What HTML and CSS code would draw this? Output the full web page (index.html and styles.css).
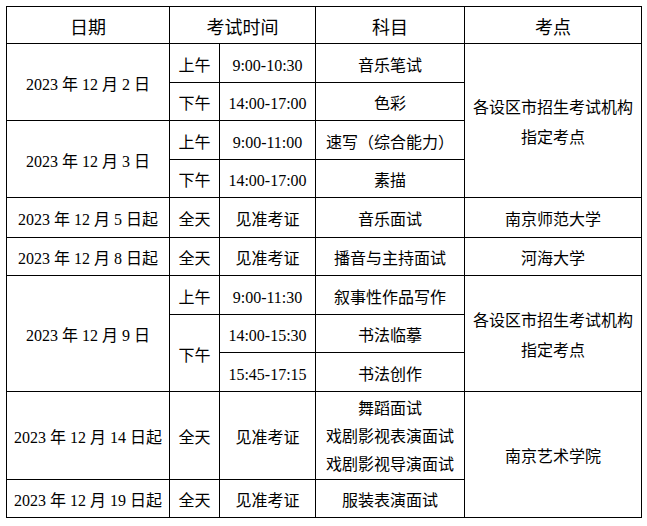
FILE: index.html
```html
<!DOCTYPE html>
<html lang="zh-CN">
<head>
<meta charset="utf-8">
<link rel="stylesheet" href="styles.css">
</head>
<body>
<table class="schedule">
  <colgroup>
    <col class="c-date">
    <col class="c-half">
    <col class="c-time">
    <col class="c-subj">
    <col class="c-place">
  </colgroup>
  <thead>
    <tr class="h37">
      <th>日期</th>
      <th colspan="2">考试时间</th>
      <th>科目</th>
      <th>考点</th>
    </tr>
  </thead>
  <tbody>
    <tr class="h39">
      <td rowspan="2">2023 年 12 月 2 日</td>
      <td>上午</td>
      <td>9:00-10:30</td>
      <td>音乐笔试</td>
      <td rowspan="4" class="multi">各设区市招生考试机构<br>指定考点</td>
    </tr>
    <tr class="h38">
      <td>下午</td>
      <td>14:00-17:00</td>
      <td>色彩</td>
    </tr>
    <tr class="h39">
      <td rowspan="2">2023 年 12 月 3 日</td>
      <td>上午</td>
      <td>9:00-11:00</td>
      <td>速写（综合能力）</td>
    </tr>
    <tr class="h38">
      <td>下午</td>
      <td>14:00-17:00</td>
      <td>素描</td>
    </tr>
    <tr class="h40">
      <td>2023 年 12 月 5 日起</td>
      <td>全天</td>
      <td>见准考证</td>
      <td>音乐面试</td>
      <td>南京师范大学</td>
    </tr>
    <tr class="h38">
      <td>2023 年 12 月 8 日起</td>
      <td>全天</td>
      <td>见准考证</td>
      <td>播音与主持面试</td>
      <td>河海大学</td>
    </tr>
    <tr class="h39">
      <td rowspan="3">2023 年 12 月 9 日</td>
      <td>上午</td>
      <td>9:00-11:30</td>
      <td>叙事性作品写作</td>
      <td rowspan="3" class="multi">各设区市招生考试机构<br>指定考点</td>
    </tr>
    <tr class="h38">
      <td rowspan="2">下午</td>
      <td>14:00-15:30</td>
      <td>书法临摹</td>
    </tr>
    <tr class="h39">
      <td>15:45-17:15</td>
      <td>书法创作</td>
    </tr>
    <tr class="h88">
      <td>2023 年 12 月 14 日起</td>
      <td>全天</td>
      <td>见准考证</td>
      <td class="multi tight">舞蹈面试<br>戏剧影视表演面试<br>戏剧影视导演面试</td>
      <td rowspan="2">南京艺术学院</td>
    </tr>
    <tr class="h38">
      <td>2023 年 12 月 19 日起</td>
      <td>全天</td>
      <td>见准考证</td>
      <td>服装表演面试</td>
    </tr>
  </tbody>
</table>
</body>
</html>
```
FILE: styles.css
```css
html, body {
  margin: 0;
  padding: 0;
  background: #fff;
}
body {
  padding: 6px 0 0 6px;
}
.schedule {
  border-collapse: collapse;
  table-layout: fixed;
  width: 636px;
  font-family: "Liberation Serif", "Noto Sans CJK SC", serif;
  font-size: 16px;
  color: #000;
}
.c-date { width: 163px; }
.c-half { width: 50px; }
.c-time { width: 96px; }
.c-subj { width: 149px; }
.c-place { width: 177px; }
.schedule th,
.schedule td {
  border: 1px solid #000;
  padding: 5px 0 0;
  text-align: center;
  vertical-align: middle;
  line-height: 20px;
  white-space: nowrap;
}
.schedule th {
  font-weight: normal;
  font-size: 18px;
}
.schedule .multi { line-height: 30px; }
.schedule .multi.tight {
  line-height: 28px;
  padding-top: 3px;
}
.h37 { height: 37px; }
.h38 { height: 38px; }
.h39 { height: 39px; }
.h40 { height: 40px; }
.h88 { height: 88px; }
```
